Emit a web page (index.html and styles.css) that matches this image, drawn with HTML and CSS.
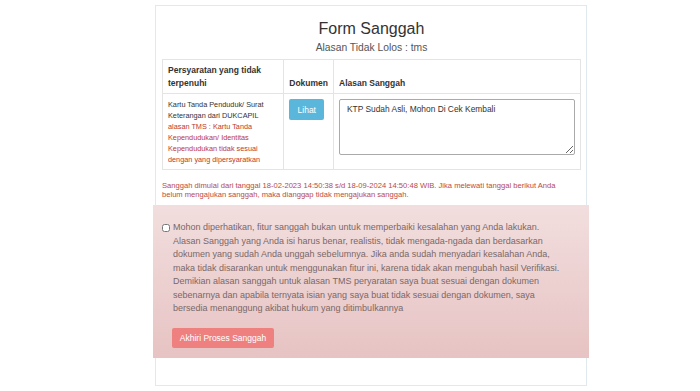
FILE: index.html
```html
<!DOCTYPE html>
<html lang="id">
<head>
  <meta charset="UTF-8">
  <title>Form Sanggah</title>
  <link rel="stylesheet" href="styles.css">
</head>
<body>
  <div class="panel">
    <h2 class="title">Form Sanggah</h2>
    <p class="subtitle">Alasan Tidak Lolos : tms</p>

    <table class="sanggah-table">
      <thead>
        <tr>
          <th class="col-syarat">Persyaratan yang tidak terpenuhi</th>
          <th class="col-dok">Dokumen</th>
          <th>Alasan Sanggah</th>
        </tr>
      </thead>
      <tbody>
        <tr>
          <td>
            Kartu Tanda Penduduk/ Surat Keterangan dari DUKCAPIL
            <span class="tms">alasan TMS : Kartu Tanda Kependudukan/ Identitas Kependudukan tidak sesuai dengan yang dipersyaratkan</span>
          </td>
          <td><button class="btn-lihat">Lihat</button></td>
          <td><textarea class="alasan">KTP Sudah Asli, Mohon Di Cek Kembali</textarea></td>
        </tr>
      </tbody>
    </table>

    <p class="notice">Sanggah dimulai dari tanggal 18-02-2023 14:50:38 s/d 18-09-2024 14:50:48 WIB. Jika melewati tanggal berikut Anda belum mengajukan sanggah, maka dianggap tidak mengajukan sanggah.</p>

    <div class="alert">
      <label class="agree">
        <input type="checkbox" class="agree-check">
        <span>Mohon diperhatikan, fitur sanggah bukan untuk memperbaiki kesalahan yang Anda lakukan. Alasan Sanggah yang Anda isi harus benar, realistis, tidak mengada-ngada dan berdasarkan dokumen yang sudah Anda unggah sebelumnya. Jika anda sudah menyadari kesalahan Anda, maka tidak disarankan untuk menggunakan fitur ini, karena tidak akan mengubah hasil Verifikasi. Demikian alasan sanggah untuk alasan TMS peryaratan saya buat sesuai dengan dokumen sebenarnya dan apabila ternyata isian yang saya buat tidak sesuai dengan dokumen, saya bersedia menanggung akibat hukum yang ditimbulkannya</span>
      </label>
      <button class="btn-akhiri">Akhiri Proses Sanggah</button>
    </div>
  </div>
</body>
</html>
```

FILE: styles.css
```css
/* General */
body {
  margin: 0;
  background: #fff;
  font-family: 'Liberation Sans', Arial, sans-serif;
  color: #333;
}

/* Panel */
.panel {
  margin: 5px 0 0 155px;
  width: 419px;
  height: 379px;
  border: 1px solid #dfe9ee;
  padding: 0 5px 0 6px;
}

.title {
  margin: 13px 0 0;
  text-align: center;
  font-size: 16px;
  font-weight: normal;
  line-height: 20px;
  color: #333;
}

.subtitle {
  margin: 2px 0 0;
  text-align: center;
  font-size: 10.3px;
  line-height: 13px;
  color: #555;
}

/* Table */
.sanggah-table {
  margin-top: 5px;
  width: 419px;
  border-collapse: collapse;
}

.sanggah-table th,
.sanggah-table td {
  border: 1px solid #e4e4e4;
  padding: 5px;
  text-align: left;
}

.sanggah-table th {
  vertical-align: bottom;
  font-weight: bold;
  font-size: 8.5px;
  line-height: 13px;
  padding-top: 4px;
  padding-bottom: 3px;
}

.sanggah-table td {
  vertical-align: top;
  font-size: 7.3px;
  line-height: 11px;
  color: #333;
  padding-top: 5px;
  padding-bottom: 4px;
}

.col-syarat {
  width: 115px;
}

.col-dok {
  width: 37px;
}

.tms {
  display: block;
  color: #c0392b;
}

.btn-lihat {
  display: block;
  width: 35px;
  height: 21px;
  background: #5bb6db;
  color: #fff;
  border: none;
  border-radius: 2px;
  font-family: inherit;
  font-size: 8.5px;
  padding: 0;
}

.alasan {
  display: block;
  width: 236px;
  height: 56px;
  box-sizing: border-box;
  border: 1px solid #aaa;
  border-radius: 2px;
  padding: 4px 7px;
  font-family: inherit;
  font-size: 8.4px;
  color: #333;
  resize: vertical;
}

/* Notice */
.notice {
  margin: 11px 16px 0 0;
  font-size: 7.6px;
  line-height: 9px;
  color: #b94a48;
}

/* Alert */
.alert {
  margin: 6px -8px 0 -9px;
  padding: 16px 25px 10px 9px;
  background: linear-gradient(#f2dede, #e7c3c3);
  color: #7a6868;
}

.agree {
  display: flex;
  align-items: flex-start;
  font-size: 9px;
  line-height: 13.5px;
}

.agree-check {
  margin: 2.5px 3px 0 0;
  width: 8px;
  height: 8px;
  flex-shrink: 0;
}

.btn-akhiri {
  display: block;
  margin: 12px 0 0 10px;
  width: 102px;
  height: 20px;
  padding: 0;
  border: none;
  border-radius: 2px;
  background: #ef8080;
  color: #fff;
  font-family: inherit;
  font-size: 8.5px;
}
```
